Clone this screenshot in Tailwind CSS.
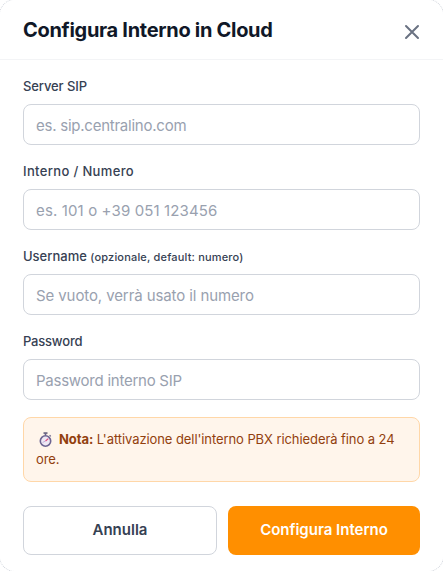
<!DOCTYPE html>
<html>
<head>
<meta charset="utf-8">
<script src="https://cdn.jsdelivr.net/npm/@tailwindcss/browser@4"></script>
</head>
<body class="bg-white font-['Inter',sans-serif]">
<div class="relative w-[443px] h-[571px] bg-white overflow-hidden flex flex-col">
  <div class="absolute -inset-px rounded-2xl border border-dotted border-gray-300 pointer-events-none"></div>
  <div class="h-[60px] pl-[23px] pr-[19px] flex items-center justify-between border-b border-gray-100">
    <h2 class="text-xl font-bold text-gray-900 tracking-[-0.3px]">Configura Interno in Cloud</h2>
    <svg class="w-6 h-6 mt-1 text-gray-500" viewBox="0 0 24 24" fill="none" stroke="currentColor" stroke-width="2" stroke-linecap="round"><path d="M6 18L18 6M6 6l12 12"/></svg>
  </div>
  <div class="pl-[23px] pr-[23px] pt-4 flex flex-col gap-4">
    <div>
      <label class="block h-5 leading-5 text-[13px] font-medium text-gray-700 mb-2 tracking-[-0.1px]">Server SIP</label>
      <input class="block w-full h-[41px] px-3 pt-[2px] border border-gray-300 rounded-lg text-[15px] tracking-[-0.24px] placeholder:text-gray-400" placeholder="es. sip.centralino.com">
    </div>
    <div>
      <label class="block h-5 leading-5 text-[13px] font-medium text-gray-700 mb-2 tracking-[0.35px]">Interno / Numero</label>
      <input class="block w-full h-[41px] px-3 pt-[2px] border border-gray-300 rounded-lg text-[15px] tracking-[0.13px] placeholder:text-gray-400" placeholder="es. 101 o +39 051 123456">
    </div>
    <div>
      <label class="block h-5 leading-5 text-[13px] font-medium text-gray-700 mb-2">Username <span class="text-[11px] tracking-[0.18px]">(opzionale, default: numero)</span></label>
      <input class="block w-full h-[41px] px-3 pt-[2px] border border-gray-300 rounded-lg text-[15px] tracking-[-0.1px] placeholder:text-gray-400" placeholder="Se vuoto, verrà usato il numero">
    </div>
    <div>
      <label class="block h-5 leading-5 text-[13px] font-medium text-gray-700 mb-2 tracking-[-0.2px]">Password</label>
      <input class="block w-full h-[41px] px-3 pt-[2px] border border-gray-300 rounded-lg text-[15px] tracking-[-0.25px] placeholder:text-gray-400" placeholder="Password interno SIP">
    </div>
    <div class="h-[65px] mt-px px-3 py-3 bg-[#fff5eb] border border-orange-200 rounded-lg text-[13px] leading-[19.5px] text-[#92400e] tracking-[-0.08px]">
      <svg class="inline-block w-[13px] h-[15px] ml-[3px] mr-[7px] align-[-3px]" viewBox="0 0 13 15"><rect x="4.5" y="0.3" width="4" height="1.5" fill="#5b5673"/><rect x="5.7" y="1" width="1.6" height="2.5" fill="#6a6488"/><path d="M10.6 3.2l1.2 1.2" stroke="#6a6488" stroke-width="1.2"/><circle cx="6.5" cy="9" r="5.2" fill="#efe8f4" stroke="#6d6592" stroke-width="1.6"/><path d="M6.5 9L9.3 6.6" stroke="#e0457b" stroke-width="1.2"/><path d="M3.6 10.5l2.9-1.5" stroke="#b9a9d6" stroke-width="0.9"/></svg><strong class="font-bold">Nota:</strong> L'attivazione dell'interno PBX richiederà fino a 24 ore.
    </div>
    <div class="flex gap-[11px] mt-2">
      <button class="w-[194px] h-[49px] border border-gray-300 rounded-lg text-gray-700 font-semibold text-[15px]">Annulla</button>
      <button class="w-[192px] h-[49px] bg-[#ff8f00] rounded-lg text-white font-semibold text-[15px]">Configura Interno</button>
    </div>
  </div>
</div>
</body>
</html>
